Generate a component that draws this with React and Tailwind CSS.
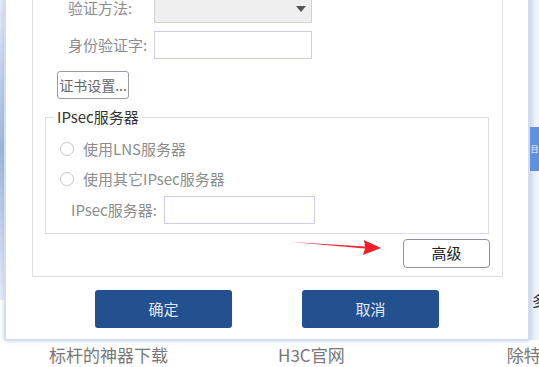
import React from "react";

const font = { fontFamily: '"Noto Sans CJK SC", "Noto Sans", sans-serif' };

const Radio = ({ label }) => (
	<div className="flex items-center h-[20px] gap-[9px]">
		<span className="w-[14px] h-[14px] rounded-full border border-[#c9c9c9] bg-white ml-[6px]" />
		<span className="text-[15px] leading-[20px] text-[#8c8c8c]">{label}</span>
	</div>
);

const App = () => {
	return (
		<div
			className="relative w-[539px] h-[367px] overflow-hidden bg-white flex flex-col"
			style={font}
		>
			{/* page background */}
			<div className="absolute left-0 top-0 w-[8px] h-[300px] bg-gradient-to-b from-[#e6edf8] via-[#9fb6dc] to-[#e8eef8]" />
			<div className="absolute right-0 top-0 w-[9px] h-[340px] bg-gradient-to-r from-[#dfe6f4] to-[#f3f6fb]" />
			<div className="absolute right-0 top-[127px] w-[9px] h-[44px] bg-[#5f8fe3] flex items-center justify-center text-[8px] text-white leading-none">
				目
			</div>
			<div className="absolute right-0 top-[292px] w-[7px] h-[16px] overflow-hidden text-[14px] text-[#222] leading-[16px]">
				多
			</div>

			{/* bottom links */}
			<div className="mt-auto flex items-center h-[22px] mb-[1px] text-[17px] text-[#777] leading-[22px] whitespace-nowrap">
				<span className="ml-[49px] shrink-0">标杆的神器下载</span>
				<span className="ml-[110px] shrink-0">H3C官网</span>
				<span className="ml-[162px] shrink-0">除特</span>
			</div>

			{/* dialog */}
			<div className="absolute left-[4px] top-[-20px] w-[526px] border-2 border-[#d4ddef] bg-white shadow-[0_0_4px_rgba(120,150,210,0.45)] rounded-b-[3px] flex flex-col pb-[11px]">
				<div className="relative ml-[26px] w-[471px] h-[295px] border border-[#dedede] flex flex-col pt-[11px]">
					<div className="flex items-center h-[29px]">
						<span className="ml-[35px] w-[86px] text-[15px] text-[#8c8c8c]">验证方法:</span>
						<div className="w-[158px] h-[29px] border border-[#d2d2d2] bg-[#efefef] flex items-center justify-end pr-[5px]">
							<svg width="10" height="6" viewBox="0 0 10 6">
								<path d="M0 0 L10 0 L5 6 Z" fill="#555" />
							</svg>
						</div>
					</div>
					<div className="flex items-center h-[28px] mt-[8px]">
						<span className="ml-[35px] w-[86px] text-[15px] text-[#8c8c8c]">身份验证字:</span>
						<div className="w-[158px] h-[28px] border border-[#d0c9e2] bg-white" />
					</div>
					<div className="mt-[12px] ml-[24px] w-[72px] h-[28px] border border-[#9a9aa6] rounded-[3px] flex items-center justify-center text-[14px] text-[#666] bg-white">
						证书设置...
					</div>

					<fieldset className="mt-[8px] ml-[12px] w-[444px] border border-[#dcdcdc] pl-[8px] pb-[9px]">
						<legend className="px-[3px] text-[15px] leading-[20px] text-[#333]">IPsec服务器</legend>
						<div className="mt-[12px]">
							<Radio label="使用LNS服务器" />
						</div>
						<div className="mt-[10px]">
							<Radio label="使用其它IPsec服务器" />
						</div>
						<div className="flex items-center h-[28px] mt-[7px]">
							<span className="ml-[17px] w-[93px] text-[15px] text-[#8c8c8c]">IPsec服务器:</span>
							<div className="w-[151px] h-[28px] border border-[#d0c9e2] bg-white" />
						</div>
					</fieldset>

					<div className="flex justify-end w-[457px] mt-[5px]">
						<div className="w-[87px] h-[29px] border border-[#8f8fa3] rounded-[4px] flex items-center justify-center text-[15px] text-[#222] bg-white">
							高级
						</div>
					</div>

					<svg
						className="absolute left-[258px] top-[256px]"
						width="92"
						height="18"
						viewBox="0 0 92 18"
					>
						<path d="M0 3 L74 7.5 L73 1 L90 9 L72 16 L74 9.5 Z" fill="#f0202a" />
					</svg>
				</div>

				<div className="flex gap-[70px] ml-[89px] mt-[13px]">
					<div className="w-[137px] h-[38px] rounded-[3px] bg-[#23508f] flex items-center justify-center text-[15px] text-[#e3e9f2]">
						确定
					</div>
					<div className="w-[137px] h-[38px] rounded-[3px] bg-[#23508f] flex items-center justify-center text-[15px] text-[#e3e9f2]">
						取消
					</div>
				</div>
			</div>
		</div>
	);
};

export default App;
